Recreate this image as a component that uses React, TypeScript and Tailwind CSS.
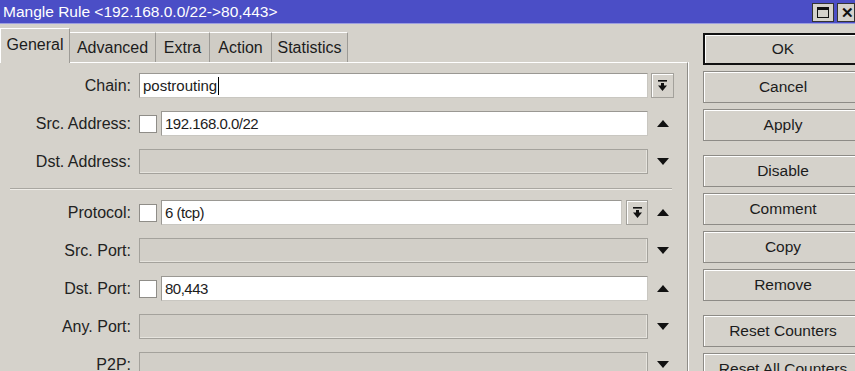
import React from 'react';

const tabs = [
  { t: 'General', w: 'w-[70px]' },
  { t: 'Advanced', w: 'w-[86px]' },
  { t: 'Extra', w: 'w-[54px]' },
  { t: 'Action', w: 'w-[62px]' },
  { t: 'Statistics', w: 'w-[76px]' },
];

function TriUp() {
  return (
    <svg width="12" height="7" viewBox="0 0 12 7"><polygon points="0,7 12,7 6,0" fill="#111" /></svg>
  );
}

function TriDown() {
  return (
    <svg width="12" height="7" viewBox="0 0 12 7"><polygon points="0,0 12,0 6,7" fill="#111" /></svg>
  );
}

function DropBtn({ w = 'w-[23px]' }: { w?: string }) {
  return (
    <div className={`${w} h-[25px] shrink-0 flex items-center justify-center bg-[#d5d2cb] border border-[#a3a19b] shadow-[inset_1px_1px_0_#ffffff]`}>
      <svg width="9" height="11" viewBox="0 0 9 11">
        <rect x="0" y="0" width="9" height="1.6" fill="#111" />
        <rect x="3" y="3" width="3" height="3" fill="#111" />
        <polygon points="0,5.5 9,5.5 4.5,11" fill="#111" />
      </svg>
    </div>
  );
}

function Check() {
  return <div className="w-[18px] h-[18px] shrink-0 bg-white border border-[#8f8d88]" />;
}

function Input({ value, enabled, cursor }: { value?: string; enabled: boolean; cursor?: boolean }) {
  const numeric = value ? /^[0-9]/.test(value) : false;
  return (
    <div
      className={`flex-1 h-[25px] flex items-center px-[3px] border ${
        enabled
          ? 'bg-white border-[#9a9893] border-b-[#c9c7c1] border-r-[#c9c7c1]'
          : 'bg-[#d2cfc8] border-[#a4a29c] shadow-[inset_-1px_-1px_0_#e6e4de]'
      }`}
    >
      <span className={`text-[15px] text-[#1c1c1c] leading-none ${numeric ? 'tracking-[-0.5px]' : ''}`}>{value}</span>
      {cursor && <span className="w-px h-[18px] bg-black ml-px" />}
    </div>
  );
}

type RowProps = {
  label: string;
  value?: string;
  check?: boolean;
  enabled?: boolean;
  dropIn?: boolean;
  trail?: 'drop' | 'up' | 'down';
  cursor?: boolean;
};

function Row({ label, value, check, enabled = false, dropIn, trail, cursor }: RowProps) {
  return (
    <div className="flex items-center h-[25px]">
      <div className="w-[131px] text-right text-[16px] text-[#222] whitespace-nowrap">{label}</div>
      <div className="w-[509px] ml-[8px] flex items-center gap-[4px]">
        {check && <Check />}
        <Input value={value} enabled={enabled} cursor={cursor} />
        {dropIn && <DropBtn w="w-[22px]" />}
      </div>
      <div className="w-[23px] ml-[3px] flex items-center justify-center">
        {trail === 'drop' && <DropBtn />}
        {trail === 'up' && <TriUp />}
        {trail === 'down' && <TriDown />}
      </div>
    </div>
  );
}

function Btn({ label, def, extra }: { label: string; def?: boolean; extra?: string }) {
  return (
    <div
      className={`h-[32px] w-[160px] shrink-0 flex items-center justify-center text-[15.5px] text-[#1c1c1c] bg-[#d5d2cb] shadow-[inset_1px_1px_0_#ffffff] whitespace-nowrap ${
        def ? 'border-2 border-[#111]' : 'border border-[#8d8b86]'
      } ${extra ?? ''}`}
    >
      {label}
    </div>
  );
}

export default function App() {
  return (
    <div className="w-[855px] h-[371px] overflow-hidden bg-[#d5d2cb] flex flex-col" style={{ fontFamily: '"Liberation Sans", Arial, sans-serif' }}>
      <div className="h-[24px] shrink-0 bg-[#4b4ec6] border-b border-[#9c9ee0] flex items-center pl-[3px] pr-0">
        <span className="text-white text-[15.5px] leading-none flex-1 whitespace-nowrap">Mangle Rule &lt;192.168.0.0/22-&gt;80,443&gt;</span>
        <div className="flex gap-[3px] items-center mt-[1px]">
          <div className="w-[22px] h-[19px] bg-[#d5d2cb] border border-[#333] flex items-center justify-center">
            <div className="w-[12px] h-[11px] border border-[#111] border-t-[3px]" />
          </div>
          <div className="w-[18px] h-[19px] bg-[#d5d2cb] border border-[#333] flex items-center justify-start pl-[3px] text-[15px] font-bold leading-none text-[#111]">
            ✕
          </div>
        </div>
      </div>

      <div className="flex flex-1 min-h-0">
        <div className="w-[688px] shrink-0 flex flex-col pt-[4px]">
          <div className="flex items-end h-[34px]">
            {tabs.map((x, i) =>
              i === 0 ? (
                <div key={x.t} className={`${x.w} h-[35px] -mb-px z-10 pt-[4px] flex justify-center items-start bg-[#d5d2cb] border-t border-l border-white border-r border-r-[#9d9b96] text-[16px] text-[#1c1c1c]`}>
                  {x.t}
                </div>
              ) : (
                <div key={x.t} className={`${x.w} h-[30px] flex justify-center items-center bg-[#cfccc5] border-t border-white border-r border-r-[#9d9b96] text-[16px] text-[#1c1c1c]`}>
                  {x.t}
                </div>
              )
            )}
          </div>
          <div className="flex-1 border-t border-white border-r border-r-[#8f8d88] shadow-[1px_0_0_#ffffff] pt-[10px] flex flex-col">
            <div className="flex flex-col gap-[13px]">
              <Row label="Chain:" value="postrouting" enabled trail="drop" cursor />
              <Row label="Src. Address:" value="192.168.0.0/22" check enabled trail="up" />
              <Row label="Dst. Address:" trail="down" />
            </div>
            <div className="ml-[10px] w-[662px] mt-[14px] h-[2px] border-t border-[#a9a7a1] border-b border-b-[#efede8]" />
            <div className="flex flex-col gap-[13px] mt-[10px]">
              <Row label="Protocol:" value="6 (tcp)" check enabled dropIn trail="up" />
              <Row label="Src. Port:" trail="down" />
              <Row label="Dst. Port:" value="80,443" check enabled trail="up" />
              <Row label="Any. Port:" trail="down" />
              <Row label="P2P:" trail="down" />
            </div>
          </div>
        </div>

        <div className="flex flex-col pl-[15px] pt-[9px] gap-[6px]">
          <Btn label="OK" def />
          <Btn label="Cancel" />
          <Btn label="Apply" />
          <Btn label="Disable" extra="mt-[8px]" />
          <Btn label="Comment" />
          <Btn label="Copy" />
          <Btn label="Remove" />
          <Btn label="Reset Counters" extra="mt-[8px]" />
          <Btn label="Reset All Counters" />
        </div>
      </div>
    </div>
  );
}
